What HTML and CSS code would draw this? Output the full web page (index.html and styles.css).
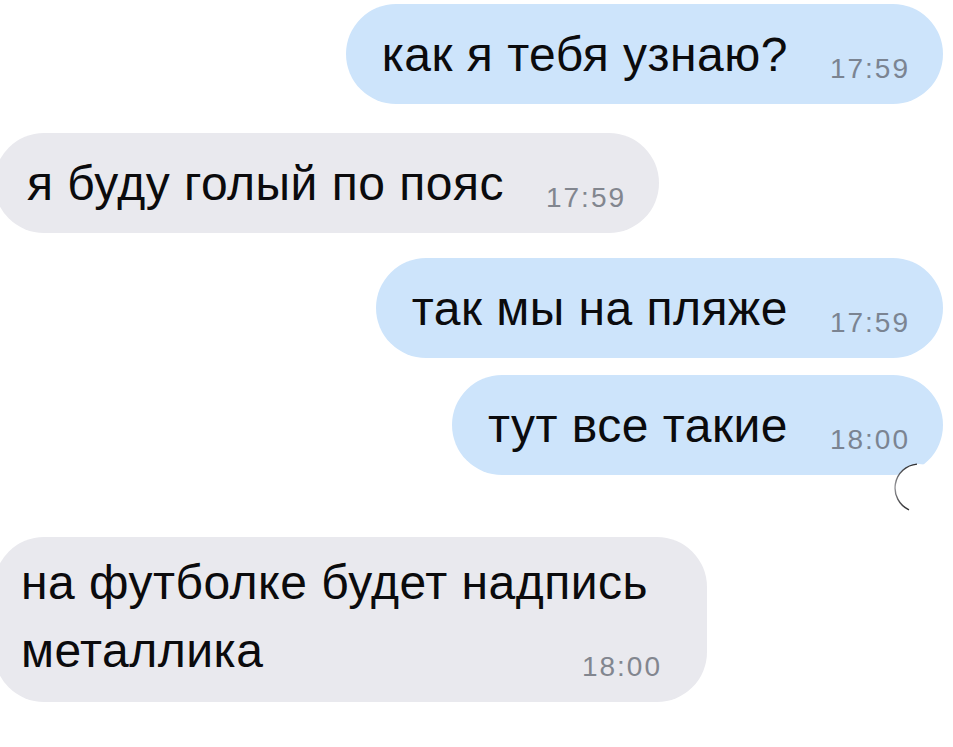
FILE: index.html
```html
<!DOCTYPE html>
<html lang="ru">
<head>
    <meta charset="UTF-8">
    <meta name="viewport" content="width=device-width, initial-scale=1.0">
    <title>Сообщения</title>
    <link rel="stylesheet" href="styles.css">
</head>
<body>
    <div class="chat">
        <div class="msg out">
            как я тебя узнаю?<span class="time">17:59</span>
        </div>
        <div class="msg in gap-l">
            я буду голый по пояс<span class="time">17:59</span>
        </div>
        <div class="msg out gap-m">
            так мы на пляже<span class="time">17:59</span>
        </div>
        <div class="msg out gap-s">
            тут все такие<span class="time">18:00</span>
        </div>

        <!-- sending indicator under the last outgoing message -->
        <div class="status">
            <svg width="50" height="50" viewBox="0 0 50 50">
                <defs>
                    <linearGradient id="arcShade" x1="0" y1="0" x2="0" y2="1">
                        <stop offset="0" stop-color="#2e2e30"/>
                        <stop offset="0.5" stop-color="#9a9a9e"/>
                        <stop offset="1" stop-color="#2e2e30"/>
                    </linearGradient>
                </defs>
                <circle cx="25" cy="25" r="24" fill="#fff"/>
                <path d="M23 1.1 A24 24 0 0 0 15 46.8" fill="none" stroke="url(#arcShade)" stroke-width="1.4"/>
            </svg>
        </div>

        <div class="msg in tall">
            на футболке будет надпись<br>металлика<span class="time">18:00</span>
        </div>
    </div>
</body>
</html>
```

FILE: styles.css
```css
body {
    margin: 0;
    background-color: #fff;
    font-family: "Liberation Sans", Arial, sans-serif;
}
.chat {
    display: flex;
    flex-direction: column;
    align-items: flex-start;
    padding: 4px 10px 0 0;
}
.msg {
    box-sizing: border-box;
    height: 100px;
    padding: 2px 33px 0 36px;
    line-height: 98px;
    border-radius: 50px;
    font-size: 48px;
    letter-spacing: 0.5px;
    color: #0b0b0d;
    white-space: nowrap;
}
.msg.out {
    align-self: flex-end;
    background-color: #cde4fb;
}
.msg.in {
    margin-left: -6px;
    padding-left: 33px;
    background-color: #e9e9ee;
}
.time {
    margin-left: 42px;
    font-size: 28px;
    line-height: 1;
    letter-spacing: 2px;
    vertical-align: -7px;
    color: #7b8492;
}
.msg.in .time {
    color: #82868f;
}
.gap-l {
    margin-top: 29px;
}
.gap-m {
    margin-top: 25px;
}
.gap-s {
    margin-top: 17px;
}
.status {
    align-self: flex-end;
    height: 50px;
    margin-top: -12px;
    margin-right: -1px;
}
.status svg {
    display: block;
}
.msg.tall {
    width: 713px;
    height: auto;
    margin-top: 24px;
    padding: 12px 20px 17px 27px;
    line-height: 68px;
}
/* time sits at the right end of the last line */
.msg.tall .time {
    float: right;
    margin: 35px 25px 0 0;
    line-height: 30px;
}
```
